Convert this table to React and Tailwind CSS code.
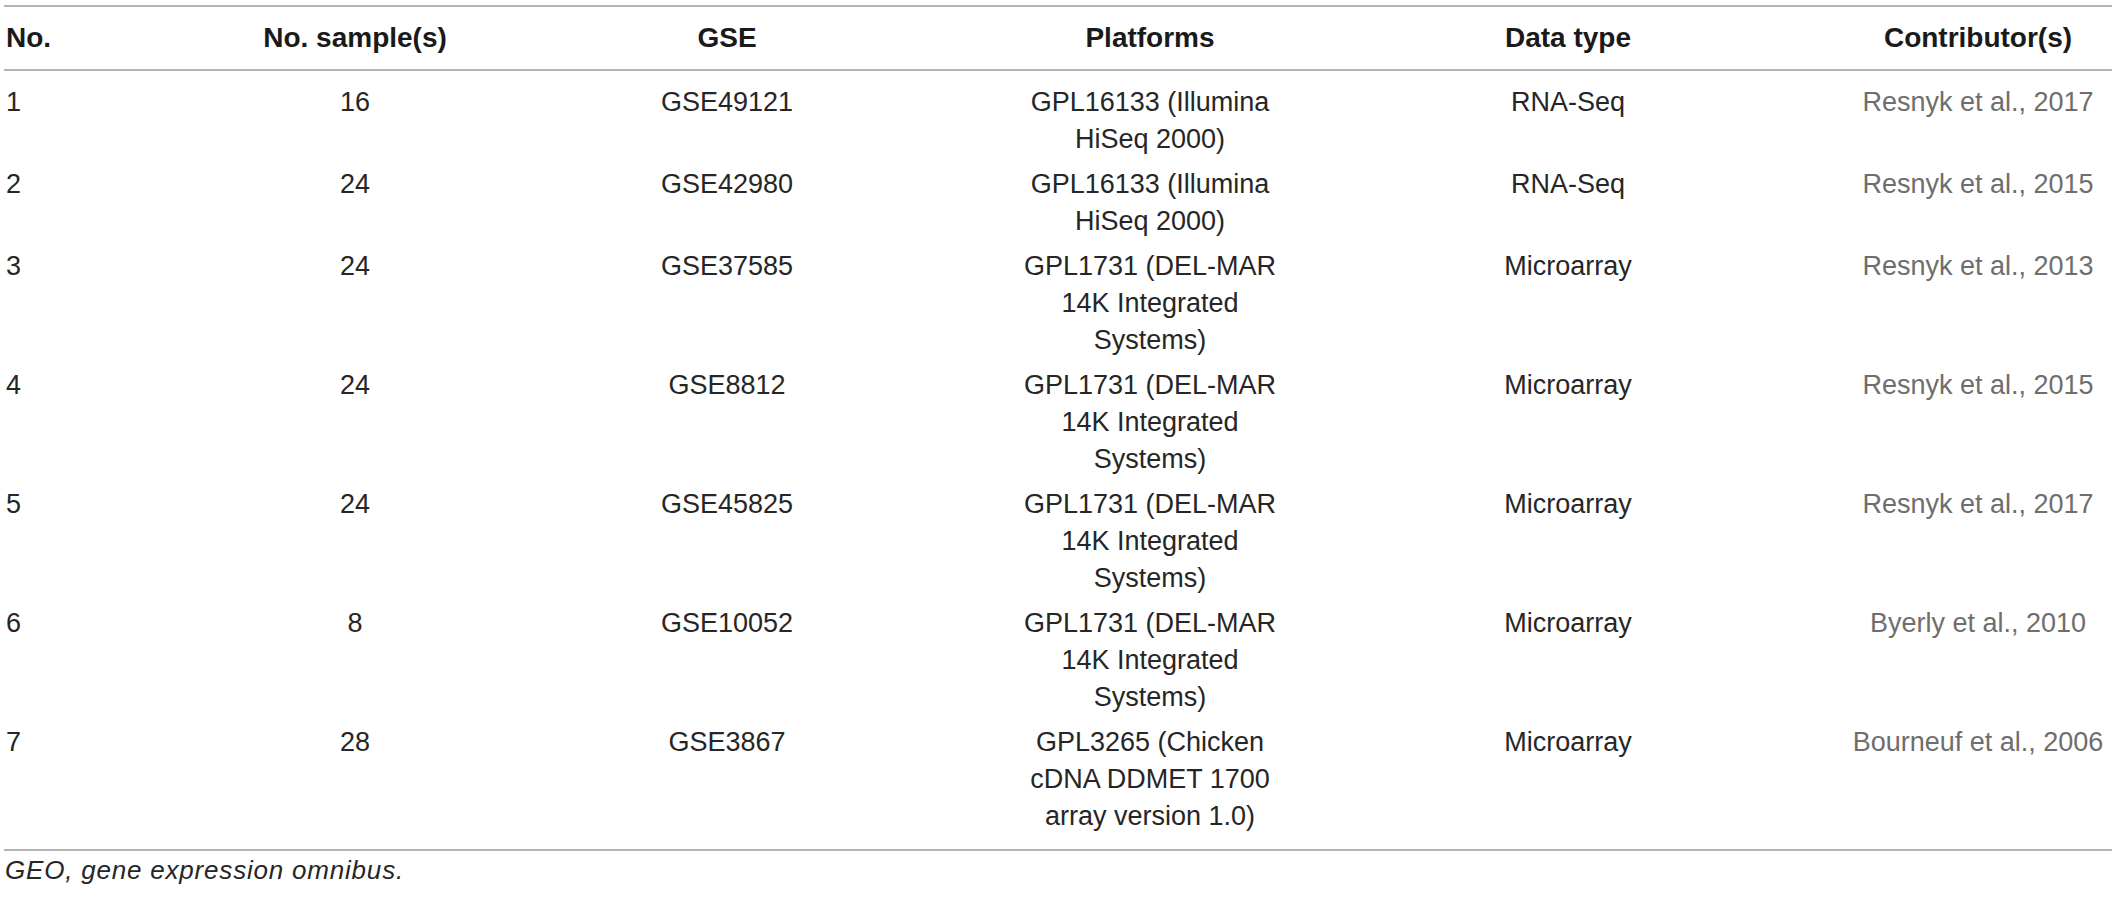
import React from "react";

const DEL = ["GPL1731 (DEL-MAR", "14K Integrated", "Systems)"];
const ILL = ["GPL16133 (Illumina", "HiSeq 2000)"];

const rows = [
  ["1", "16", "GSE49121", ILL, "RNA-Seq", "Resnyk et al., 2017"],
  ["2", "24", "GSE42980", ILL, "RNA-Seq", "Resnyk et al., 2015"],
  ["3", "24", "GSE37585", DEL, "Microarray", "Resnyk et al., 2013"],
  ["4", "24", "GSE8812", DEL, "Microarray", "Resnyk et al., 2015"],
  ["5", "24", "GSE45825", DEL, "Microarray", "Resnyk et al., 2017"],
  ["6", "8", "GSE10052", DEL, "Microarray", "Byerly et al., 2010"],
  ["7", "28", "GSE3867", ["GPL3265 (Chicken", "cDNA DDMET 1700", "array version 1.0)"], "Microarray", "Bourneuf et al., 2006"],
];

const grid = "grid grid-cols-[260px_182px_562px_284px_552px_268px]";
const cell = "flex flex-col items-center whitespace-nowrap";

export default function App() {
  return (
    <div
      className="bg-white w-[2117px] h-[897px] overflow-hidden"
      style={{ fontFamily: '"Liberation Sans", Arial, sans-serif' }}
    >
      <div className="ml-[4px] w-[2108px] pt-[5px]">
        <div className="h-[2px] bg-[#b4b4b4]" />
        <div className={`${grid} pt-[12px] pb-[13px] text-[28px] leading-[37px] font-bold text-[#1a1a1a]`}>
          <div className="pl-[2px] whitespace-nowrap">No.</div>
          <div className={cell}>No. sample(s)</div>
          <div className={cell}>GSE</div>
          <div className={cell}>Platforms</div>
          <div className={cell}>Data type</div>
          <div className={cell}>Contributor(s)</div>
        </div>
        <div className="h-[2px] bg-[#b4b4b4]" />
        <div className="pt-[9px] pb-[10px] text-[27px] leading-[37px] text-[#262626]">
          {rows.map((r) => (
            <div key={r[0]} className={`${grid} py-[4px]`}>
              <div className="pl-[2px] whitespace-nowrap">{r[0]}</div>
              <div className={cell}>{r[1]}</div>
              <div className={cell}>{r[2]}</div>
              <div className={cell}>
                {r[3].map((l) => (
                  <span key={l}>{l}</span>
                ))}
              </div>
              <div className={cell}>{r[4]}</div>
              <div className={`${cell} text-[#6e6e6e]`}>{r[5]}</div>
            </div>
          ))}
        </div>
        <div className="h-[2px] bg-[#b4b4b4]" />
        <div className="mt-[4px] pl-[1px] text-[26px] leading-[30px] italic tracking-[0.8px] text-[#262626] whitespace-nowrap">
          GEO, gene expression omnibus.
        </div>
      </div>
    </div>
  );
}
